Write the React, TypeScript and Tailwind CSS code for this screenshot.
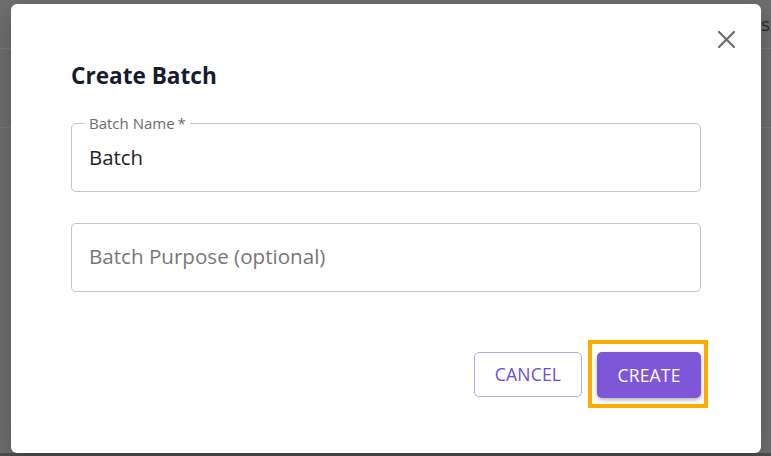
import { useState } from "react"

function CloseIcon() {
  return (
    <svg width="17" height="17" viewBox="0 0 17 17" fill="none">
      <path d="M1 1L16 16M16 1L1 16" stroke="#6b6b6b" strokeWidth="2.2" strokeLinecap="square" />
    </svg>
  )
}

export default function App() {
  const [name, setName] = useState("Batch")
  const [purpose, setPurpose] = useState("")

  return (
    <div
      className="relative h-[456px] w-[771px] overflow-hidden bg-[#6f6f6f]"
      style={{ fontFamily: '"Open Sans", "Noto Sans", sans-serif' }}
    >
      {/* page behind the backdrop */}
      <div className="flex h-[49px] items-center justify-end border-b border-[#7c7c7c] pr-[1px] text-[19px] text-[#2a2a2a]">
        <span>s</span>
      </div>
      <div className="h-[79px] border-b border-[#7a7a7a]" />
      <div className="absolute bottom-0 left-0 h-[3px] w-full bg-[#4f4f4f]" />

      {/* dialog */}
      <div className="absolute left-[11px] top-[4px] flex h-[449px] w-[750px] flex-col rounded-[6px] bg-white shadow-[0_8px_30px_rgba(0,0,0,0.25)]">
        <button className="absolute right-[26px] top-[27px]" aria-label="Close">
          <CloseIcon />
        </button>

        <div className="px-[60px] pt-[57px]">
          <h2 className="text-[22.6px] font-bold leading-[30px] text-[#161c2d]">Create Batch</h2>

          <div className="relative mt-[32px] flex h-[69px] items-center rounded-[5px] border border-[#c4c4c4] px-[17px] pb-[2px]">
            <span className="absolute left-[13px] top-[-11px] bg-white px-[4px] text-[15px] leading-[20px] text-[#6b6b6b]">
              Batch Name<span className="ml-[3px]">*</span>
            </span>
            <input
              value={name}
              onChange={(e) => setName(e.target.value)}
              className="w-full bg-transparent text-[20.4px] leading-[28px] text-[#222] outline-none"
            />
          </div>

          <div className="mt-[31px] flex h-[69px] items-center rounded-[5px] border border-[#c4c4c4] px-[17px] pb-[3px]">
            <input
              value={purpose}
              onChange={(e) => setPurpose(e.target.value)}
              placeholder="Batch Purpose (optional)"
              className="w-full bg-transparent text-[20.6px] leading-[28px] text-[#222] outline-none placeholder:text-[#777]"
            />
          </div>
        </div>

        <div className="mt-[48px] flex items-center justify-end gap-[6px] pr-[53px]">
          <button className="h-[45px] w-[108px] rounded-[5px] border border-[#b7a6ee] text-[17.5px] font-medium tracking-[0.2px] text-[#6a4dd8]">
            CANCEL
          </button>
          <div className="border-[4px] border-[#ffab00] pb-[6px] pl-[5px] pr-[3px] pt-[8px]">
            <button className="h-[46px] w-[104px] rounded-[5px] bg-[#7e56d8] text-[17.5px] font-medium tracking-[0.2px] text-white shadow-[0_2px_4px_rgba(0,0,0,0.3)]">
              CREATE
            </button>
          </div>
        </div>
      </div>
    </div>
  )
}
